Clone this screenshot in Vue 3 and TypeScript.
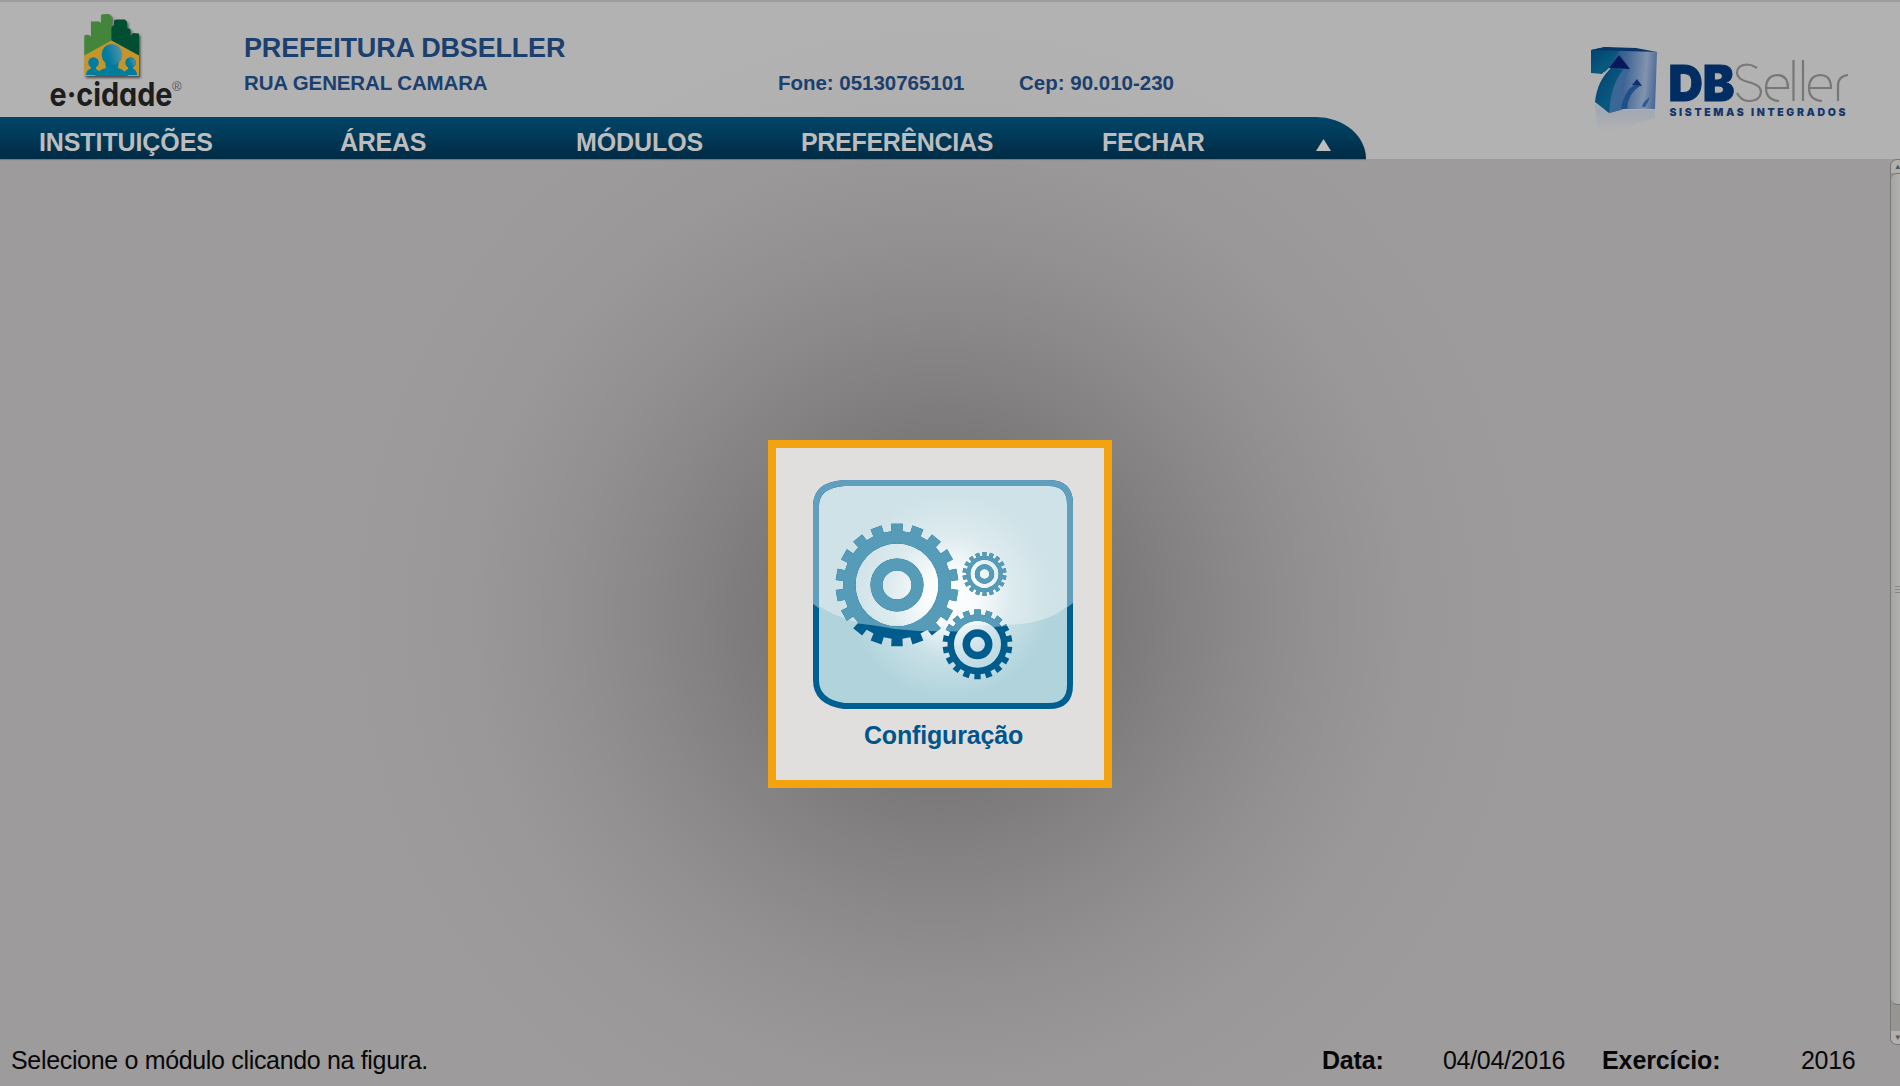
<script setup lang="ts">
interface Gear { cx: number; cy: number; r: number; tooth: number; teeth: number; hole: number; ringOuter: number; ringInner: number }

const menu = [
  { label: 'INSTITUIÇÕES', cls: 'm1' },
  { label: 'ÁREAS', cls: 'm2' },
  { label: 'MÓDULOS', cls: 'm3' },
  { label: 'PREFERÊNCIAS', cls: 'm4' },
  { label: 'FECHAR', cls: 'm5' },
]

const gears: Gear[] = [
  { cx: 84, cy: 105, r: 54, tooth: 61.5, teeth: 18, hole: 41.5, ringOuter: 26.5, ringInner: 14.5 },
  { cx: 171.5, cy: 94, r: 18, tooth: 22, teeth: 18, hole: 14.2, ringOuter: 9.7, ringInner: 5 },
  { cx: 164.5, cy: 164.3, r: 30, tooth: 35, teeth: 18, hole: 23.5, ringOuter: 15, ringInner: 7.5 },
]

function circle(cx: number, cy: number, r: number): string {
  return `M${cx - r} ${cy}a${r} ${r} 0 1 0 ${2 * r} 0a${r} ${r} 0 1 0 ${-2 * r} 0Z`
}

function gearPath(g: Gear): string {
  const pts: string[] = []
  const step = (Math.PI * 2) / g.teeth
  for (let i = 0; i < g.teeth; i++) {
    const a = -Math.PI / 2 + i * step
    const corners: [number, number][] = [[-0.29, g.r], [-0.27, g.tooth], [0.27, g.tooth], [0.29, g.r]]
    for (const [k, r] of corners) {
      pts.push(`${(g.cx + r * Math.cos(a + k * step)).toFixed(2)} ${(g.cy + r * Math.sin(a + k * step)).toFixed(2)}`)
    }
  }
  return `M${pts.join('L')}Z` + circle(g.cx, g.cy, g.hole) + circle(g.cx, g.cy, g.ringOuter) + circle(g.cx, g.cy, g.ringInner)
}
const gearsPath = gears.map(gearPath)
</script>

<template>
  <div class="screen">
    <header class="top">
      <svg class="ecidade" width="145" height="115" viewBox="0 0 145 115">
        <defs>
          <filter id="soft" x="-20%" y="-20%" width="150%" height="150%">
            <feDropShadow dx="1.5" dy="2" stdDeviation="1.3" flood-color="#222" flood-opacity=".7" />
          </filter>
          <linearGradient id="head" x1=".3" y1=".5" x2="1" y2=".3">
            <stop offset="0" stop-color="#067b9e" /><stop offset="1" stop-color="#5794a8" />
          </linearGradient>
        </defs>
        <g filter="url(#soft)">
          <path fill="#43853b" d="M39.300 56V36Q40 34 44 35L46 37V21.500H54L56 23V15Q57 13.500 64 14L66.500 16V41Z" />
          <path fill="#005033" d="M66.500 41V27L69 25V20.500L71 19.500H80L82 22V28L85.500 29V36L88 33L94 33.500V56Z" />
          <path fill="#c5952c" d="M66.500 40.500L94 55.500V76H39.300V55.500Z" />
          <g fill="#067b9e">
            <path d="M41 75Q41 70 46 68.500L46 66H51V69L54 71V75Z" /><circle cx="48.500" cy="62.500" r="5.300" />
            <path d="M80 75V71L83 69V66H88V68.500Q92 70 92 75Z" /><circle cx="85.500" cy="62.500" r="5.300" />
            <path d="M50 76Q53 70 61 68L60 61H74L73 68Q80 70 83 76Z" />
          </g>
          <circle cx="67" cy="54.500" r="10.500" fill="url(#head)" />
          <circle cx="86" cy="62.500" r="4.300" fill="url(#head)" />
        </g>
        <text class="brand" x="4.500" y="105.500" textLength="123" lengthAdjust="spacingAndGlyphs">e·cidade</text>
        <text class="reg" x="127" y="91">®</text>
      </svg>
      <div class="institution">
        <h1>PREFEITURA DBSELLER</h1>
        <div class="contact">
          <span class="street">RUA GENERAL CAMARA</span>
          <span class="phone">Fone: 05130765101</span>
          <span>Cep: 90.010-230</span>
        </div>
      </div>
      <svg class="dbseller" width="270" height="106" viewBox="1585 36 270 106">
        <defs>
          <linearGradient id="cube" x1="0" y1=".2" x2="1" y2=".3"><stop offset="0" stop-color="#0f4d7c" /><stop offset=".4" stop-color="#3f6596" /><stop offset=".8" stop-color="#8293ae" /><stop offset="1" stop-color="#4c6b98" /></linearGradient>
          <linearGradient id="side" x1="0" y1="0" x2="1" y2="1"><stop offset="0" stop-color="#053f70" /><stop offset=".6" stop-color="#075a80" /><stop offset="1" stop-color="#063666" /></linearGradient>
          <linearGradient id="reflect" x1="0" y1="0" x2="0" y2="1"><stop offset="0" stop-color="#8397b2" stop-opacity=".45" /><stop offset="1" stop-color="#8397b2" stop-opacity="0" /></linearGradient>
        </defs>
        <path fill="url(#reflect)" d="M1595 104L1609 113L1622 110L1655 110V118L1610 132L1597 128Z" />
        <path fill="url(#cube)" d="M1607 49L1657 52L1655 109H1624L1609 113L1604 73Z" />
        <path fill="url(#side)" d="M1591 50L1605 47L1621 49L1609 66L1602 74L1591 73Z" />
        <path fill="#0a3569" d="M1591 50L1605 47L1636 48L1657 52L1610 50.500Z" />
        <path fill="#b2b2b2" d="M1590 74.500L1602 74.500L1609 68L1612 69Q1598 80 1595 103L1590 103Z" />
        <path fill="url(#side)" d="M1595 102Q1597 81 1611 68L1624 70Q1611 85 1609 113Z" />
        <path fill="#3a6796" d="M1609 113Q1611 83 1624 69L1630 70Q1621 79 1621 110Z" />
        <path fill="#06195a" d="M1619 55L1630 69L1609 68Z" />
        <path fill="#1f5187" d="M1621 109Q1624 91 1634 85L1640 86Q1628 93 1627 109Z" />
        <path fill="#102d70" d="M1637 79L1642 86L1632 85Z" />
        <path fill="#35598f" d="M1642 107Q1643 101 1650 97L1648 102L1645 107Z" />
        <text class="db" x="1668.500" y="101" textLength="66" lengthAdjust="spacingAndGlyphs">DB</text>
        <g class="seller">
          <path d="M1757 68Q1752 64.500 1747 64.500Q1737 65 1737 73Q1737 79 1748 82Q1761 85 1761 92Q1760 101 1749 101Q1741 101 1737 93M1766 88H1788Q1788 75 1777 75Q1766 76 1766 88Q1766 100 1779 101M1793.500 60V101M1803 60V101M1809 88H1831Q1831 75 1820 75Q1809 76 1809 88Q1809 100 1822 101M1838 101V86Q1838 76 1848 75" />
        </g>
        <text class="tagline" x="1669.500" y="115.500" textLength="176">SISTEMAS INTEGRADOS</text>
      </svg>
    </header>

    <nav class="menu">
      <a v-for="m in menu" :key="m.label" :class="m.cls">{{ m.label }}</a>
      <svg class="up" width="15" height="12" viewBox="0 0 15 12"><path d="M7.500 0L15 12H0Z" fill="#bdbdbd" /></svg>
    </nav>

    <main class="work">
      <section class="module">
        <svg width="260" height="229" viewBox="0 0 260 229">
          <defs>
            <radialGradient id="glow" gradientUnits="userSpaceOnUse" cx="137" cy="116" r="104">
              <stop offset="0" stop-color="#fff" /><stop offset=".25" stop-color="#fff" stop-opacity=".88" /><stop offset=".6" stop-color="#fff" stop-opacity=".3" /><stop offset="1" stop-color="#fff" stop-opacity="0" />
            </radialGradient>
            <clipPath id="frame"><path d="M29 0H237Q260 0 260 25V206Q260 229 237 229H31Q0 223 0 200V28Q0 0 29 0Z" /></clipPath>
            <clipPath id="gloss"><path d="M0 0H260V123Q235 144 190 146L165 149L150 151.500L106 151L82 149Q55 144 38 143Q15 136 0 124Z" /></clipPath>
          </defs>
          <path d="M31 3H236Q257 3 257 24V205Q257 226 236 226H31Q3 222 3 200V26Q3 5 31 3Z" fill="#b0d3dc" />
          <path d="M3 3H257V124Q235 145 190 145H60Q25 140 3 124Z" fill="#cee2e7" clip-path="url(#frame)" />
          <rect x="5" y="5" width="250" height="219" fill="url(#glow)" />
          <path class="edge" d="M31 3H236Q257 3 257 24V205Q257 226 236 226H31Q3 222 3 200V26Q3 5 31 3Z" stroke="#005f91" />
          <g fill="#005c8d" fill-rule="evenodd"><path v-for="(d, i) in gearsPath" :key="i" :d="d" /></g>
          <g clip-path="url(#gloss)">
            <path class="edge" d="M31 3H236Q257 3 257 24V205Q257 226 236 226H31Q3 222 3 200V26Q3 5 31 3Z" stroke="#629fbe" />
            <g fill="#569bb7" fill-rule="evenodd"><path v-for="(d, i) in gearsPath" :key="i" :d="d" /></g>
          </g>
        </svg>
        <strong>Configuração</strong>
      </section>
      <aside class="scroll">
        <i class="arrow">▴</i>
        <div class="thumb"><b></b><b></b><b></b></div>
        <i class="arrow">▾</i>
      </aside>
    </main>

    <footer class="status">
      <span class="hint">Selecione o módulo clicando na figura.</span>
      <b class="date-label">Data:</b>
      <span class="date">04/04/2016</span>
      <b class="year-label">Exercício:</b>
      <span class="year">2016</span>
    </footer>
  </div>
</template>

<style>
body { margin: 0; overflow: hidden; }
</style>

<style scoped>
.screen {
  width: 1900px; height: 1086px; display: flex; flex-direction: column; overflow: hidden;
  background:
    radial-gradient(circle at 940px 614px, rgba(0,0,0,.3) 0, rgba(0,0,0,.225) 172px, rgba(0,0,0,.182) 220px, rgba(0,0,0,.138) 275px, rgba(0,0,0,.095) 335px, rgba(0,0,0,.056) 400px, rgba(0,0,0,.025) 470px, rgba(0,0,0,.008) 540px, transparent 610px),
    linear-gradient(#b2b2b2 159px, #9d9b9b 159px);
  font-family: "Liberation Sans", Arial, sans-serif; white-space: nowrap;
}
.top { height: 117px; box-sizing: border-box; border-top: 2px solid #9d9b9b; display: flex; }
.ecidade { margin: -2px 0 0 45px; flex: none; }
.brand { font: 700 32px Inter, sans-serif; font-feature-settings: "cv11"; fill: #1d1d1d; }
.reg { font: 13px "Liberation Sans", sans-serif; fill: #555; }
.institution { margin-left: 54px; width: 1341px; flex: none; color: #1b406f; font-weight: bold; }
h1 { margin: 29px 0 0; font-size: 27px; line-height: 34px; letter-spacing: -.17px; }
.contact { display: flex; margin-top: 4px; font-size: 20.5px; line-height: 28px; }
.street { width: 534px; letter-spacing: -.14px; }
.phone { width: 241px; letter-spacing: -.03px; }
.dbseller { flex: none; margin-top: 34px; }
.db { font: 900 50px Inter, sans-serif; fill: #012d63; stroke: #012d63; stroke-width: 1px; }
.seller path { fill: none; stroke: #777; stroke-width: 2.200; }
.tagline { font: 900 10.500px Inter, sans-serif; fill: #14386c; }
.menu { width: 1366px; height: 42px; box-sizing: border-box; padding-left: 39px; border-top-right-radius: 50px 42px; background: linear-gradient(#004467, #003d5d 35%, #00304b 80%, #002b45); box-shadow: 0 1px 1px #777; display: flex; align-items: flex-start; flex: none; color: #bdbdbd; font-weight: bold; font-size: 25px; line-height: 28px; letter-spacing: -.25px; }
.menu a { margin-top: 11px; flex: none; }
.m1 { width: 301px; letter-spacing: -.1px; } .m2 { width: 236px; } .m3 { width: 225px; letter-spacing: -.1px; } .m4 { width: 301px; letter-spacing: -.32px; } .m5 { width: 214px; }
.up { margin-top: 22px; flex: none; }
.work { flex: none; height: 886px; display: flex; justify-content: space-between; }
.module { margin: 281px 0 0 768px; width: 344px; height: 348px; box-sizing: border-box; border: 8px solid #f2a30f; background: #e1dfde; display: flex; flex-direction: column; align-items: center; }
.module svg { margin: 32px 0 0 6px; flex: none; }
.module strong { margin: 11px 0 0 7px; color: #00558b; font-size: 25px; line-height: 30px; letter-spacing: -.17px; }
.edge { fill: none; stroke-width: 6; }
.scroll { width: 10px; box-sizing: border-box; border: 1px solid #777; border-right: 0; border-radius: 7px 0 0 7px; background: #969592; display: flex; flex-direction: column; overflow: hidden; }
.arrow { height: 13px; flex: none; font: 9px/13px "DejaVu Sans", sans-serif; color: #555; background: #b0b0ae; text-align: right; }
.thumb { flex: 1; margin-bottom: 26px; border-top: 1px solid #777; border-bottom: 1px solid #777; border-radius: 6px 0 0 6px; background: linear-gradient(90deg, #a4a4a2, #b1b1af); display: flex; flex-direction: column; justify-content: center; align-items: flex-end; gap: 2px; }
.thumb b { width: 5px; height: 1px; background: #888; }
.status { height: 41px; display: flex; align-items: center; padding: 0 0 11px 11px; font-size: 25px; line-height: 30px; color: #080808; box-sizing: border-box; }
.hint { width: 1311px; flex: none; letter-spacing: -.33px; }
.date-label { width: 121px; flex: none; letter-spacing: -.2px; } .date { width: 159px; flex: none; letter-spacing: -.3px; } .year-label { width: 199px; flex: none; letter-spacing: -.1px; } .year { letter-spacing: -.3px; }
</style>
